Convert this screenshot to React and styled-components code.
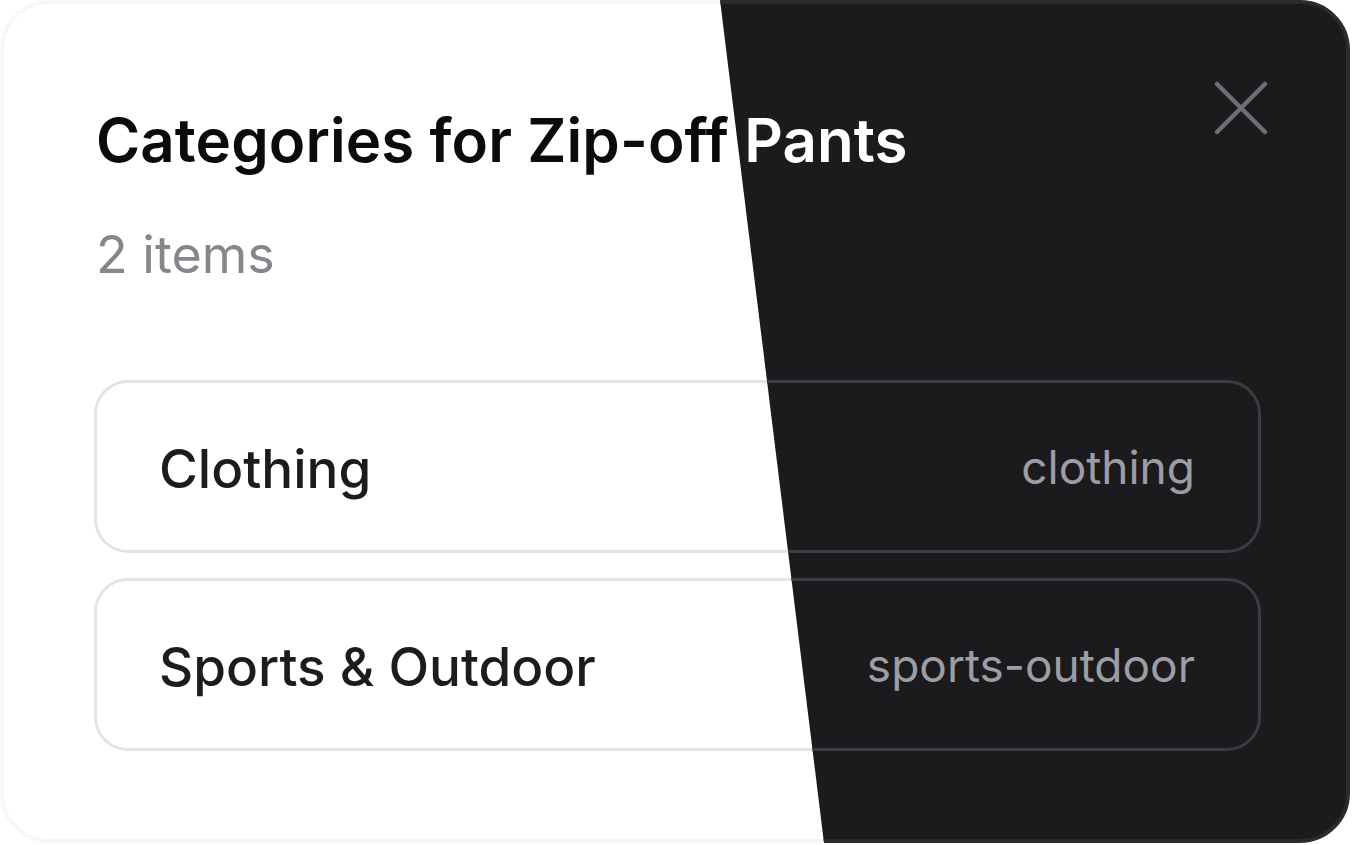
import React from "react";
import styled, { createGlobalStyle } from "styled-components";

const categories = [
  { name: "Clothing", slug: "clothing" },
  { name: "Sports & Outdoor", slug: "sports-outdoor" },
];

const themes = {
  light: {
    bg: "#ffffff",
    edge: "#f7f7f8",
    title: "#0b0b0c",
    muted: "#86868c",
    cardBorder: "#e4e4e7",
    name: "#1c1c1e",
    slug: "#8e8e93",
    close: "#7c7c82",
  },
  dark: {
    bg: "#1b1b1d",
    edge: "#2b2b2e",
    title: "#ffffff",
    muted: "#8e8e93",
    cardBorder: "#3b3b41",
    name: "#f4f4f5",
    slug: "#9d9da3",
    close: "#6e6e75",
  },
};

const GlobalStyle = createGlobalStyle`
  html, body {
    margin: 0;
    padding: 0;
    background: #ffffff;
  }
  body {
    font-family: Inter, "Noto Sans", "Liberation Sans", sans-serif;
    -webkit-font-smoothing: antialiased;
  }
`;

const Stage = styled.div`
  position: relative;
  width: 1350px;
  height: 843px;
`;

const Modal = styled.section`
  box-sizing: border-box;
  width: 1350px;
  height: 843px;
  padding: 100px 85px 0 90px;
  border-radius: 50px;
  border: 4px solid ${(p) => p.$t.edge};
  background: ${(p) => p.$t.bg};
  display: flex;
  flex-direction: column;
  position: relative;
`;

const DarkLayer = styled.div`
  position: absolute;
  inset: 0;
  clip-path: polygon(720px 0, 100% 0, 100% 100%, 824px 100%);
`;

const Title = styled.h2`
  margin: 0;
  padding-left: 2px;
  font-size: 60px;
  line-height: 1.2;
  font-weight: 600;
  letter-spacing: 0.1px;
  color: ${(p) => p.$t.title};
`;

const Count = styled.p`
  margin: 48px 0 0 0;
  padding-left: 2px;
  font-size: 52px;
  line-height: 1.2;
  font-weight: 400;
  color: ${(p) => p.$t.muted};
`;

const List = styled.ul`
  list-style: none;
  margin: 94px 0 0 0;
  padding: 0;
  display: flex;
  flex-direction: column;
  gap: 25px;
`;

const Card = styled.li`
  box-sizing: border-box;
  height: 173px;
  border: 3px solid ${(p) => p.$t.cardBorder};
  border-radius: 34px;
  padding: 0 63px 0 62px;
  display: flex;
  align-items: center;
  justify-content: space-between;
`;

const Name = styled.span`
  font-size: 53px;
  font-weight: 500;
  color: ${(p) => p.$t.name};
  padding-top: 4px;
`;

const Slug = styled.span`
  font-size: 46px;
  font-weight: 400;
  color: ${(p) => p.$t.slug};
`;

const CloseButton = styled.button`
  position: absolute;
  top: 77px;
  right: 78px;
  width: 54px;
  height: 54px;
  padding: 0;
  border: none;
  background: transparent;
  color: ${(p) => p.$t.close};
  display: flex;
  align-items: center;
  justify-content: center;
`;

const Panel = ({ t }) => (
  <Modal $t={t}>
    <CloseButton $t={t} aria-label="Close">
      <svg width="54" height="54" viewBox="0 0 54 54" fill="none">
        <path
          d="M3 3L51 51M51 3L3 51"
          stroke="currentColor"
          strokeWidth="4.5"
          strokeLinecap="round"
        />
      </svg>
    </CloseButton>
    <Title $t={t}>Categories for Zip-off Pants</Title>
    <Count $t={t}>2 items</Count>
    <List>
      {categories.map((c) => (
        <Card key={c.slug} $t={t}>
          <Name $t={t}>{c.name}</Name>
          <Slug $t={t}>{c.slug}</Slug>
        </Card>
      ))}
    </List>
  </Modal>
);

const App = () => {
  return (
    <>
      <GlobalStyle />
      <Stage>
        <Panel t={themes.light} />
        <DarkLayer>
          <Panel t={themes.dark} />
        </DarkLayer>
      </Stage>
    </>
  );
};

export default App;
